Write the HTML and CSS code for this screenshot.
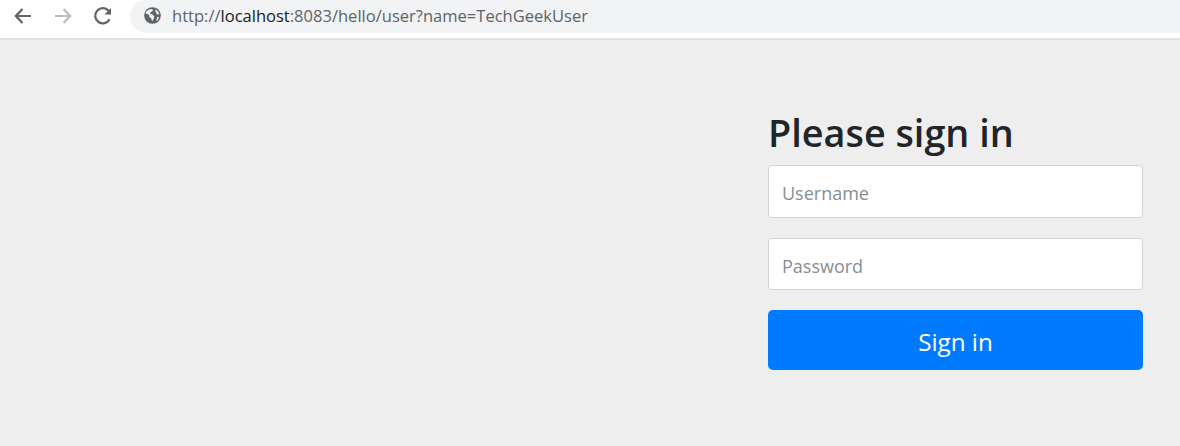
FILE: index.html
```html
<!DOCTYPE html>
<html lang="en">
<head>
<meta charset="utf-8">
<title>Please sign in</title>
<link rel="stylesheet" href="styles.css">
</head>
<body>
<header class="toolbar">
  <svg class="nav-icon" viewBox="0 0 24 24"><path class="stroke dark" d="M20 12H5M11.5 5L4.8 12l6.700 7"/></svg>
  <svg class="nav-icon" viewBox="0 0 24 24"><path class="stroke light" d="M4 12h15M12.500 5l6.700 7-6.700 7"/></svg>
  <svg class="nav-icon" viewBox="0 0 24 24"><path class="stroke dark" d="M18.600 15.200A7.600 7.600 0 1 1 17.600 6.800"/><path class="fill-dark" d="M20 4v6.600h-6.600z"/></svg>
  <div class="omnibox">
    <svg class="globe" viewBox="0 0 18 18"><circle class="fill-dark" cx="9" cy="9" r="8.800"/><path class="land" d="M2.500 4.500l4-2.300 3 .5-.6 2-2 .6-.5 1.600 2.600 1 1.800 2-.7 3-1.600 2.200-.8-3-2-1.600-.4-2.200L1.800 7zM12 2.300l3.300 2.600.8 2.800-2.200.2-1.700-2.800zM14 10.500l2 .1-1.500 3.400-1.500.7z"/></svg>
    <span class="url"><span class="url-dim">http://</span><span class="url-host">localhost</span><span class="url-dim">:8083/hello/user?name=TechGeekUser</span></span>
  </div>
</header>
<main class="page">
  <form class="signin">
    <h2 class="heading">Please sign in</h2>
    <input class="field field-user" type="text" placeholder="Username">
    <input class="field field-pass" type="password" placeholder="Password">
    <button class="submit" type="button">Sign in</button>
  </form>
</main>
</body>
</html>
```
FILE: styles.css
```css
* { box-sizing: border-box; }
html, body { margin: 0; height: 100%; overflow: hidden; }
body {
  display: flex;
  flex-direction: column;
  background: #eeeeee;
  font-family: "Open Sans", "Noto Sans", sans-serif;
}
.toolbar {
  display: flex;
  align-items: flex-start;
  height: 40px;
  flex: none;
  background: #fff;
  border-bottom: 2px solid #dee1e6;
  padding-left: 3px;
}
.nav-icon {
  width: 40px;
  height: 32px;
  padding: 4px 8px;
  flex: none;
}
.stroke { fill: none; stroke-width: 2.2; }
.dark { stroke: #5f6368; }
.light { stroke: #bcbdbf; }
.fill-dark { fill: #5f6368; }
.land { fill: #f1f3f4; }
.omnibox {
  display: flex;
  align-items: center;
  flex: 1;
  height: 33px;
  margin-left: 7px;
  padding: 0 0 2px 14px;
  background: #f1f3f4;
  border-radius: 16.5px 0 0 16.5px;
}
.globe { width: 17px; height: 17px; flex: none; }
.url {
  margin-left: 11px;
  font-size: 16.55px;
  white-space: nowrap;
}
.url-dim { color: #5f6368; }
.url-host { color: #202124; }
.page {
  flex: 1;
  display: flex;
  justify-content: flex-end;
  padding: 68px 37px 0 0;
}
.signin {
  display: flex;
  flex-direction: column;
  width: 375px;
}
.heading {
  margin: 0 0 8px;
  height: 49px;
  font-size: 37.8px;
  font-weight: 600;
  line-height: 49px;
  color: #212529;
}
.field {
  width: 100%;
  padding: 2px 13px 0;
  background: #fff;
  border: 1px solid #ced4da;
  border-radius: 4px;
  font: 400 18px "Open Sans", "Noto Sans", sans-serif;
  color: #495057;
  outline: none;
}
.field::placeholder { color: #868e96; opacity: 1; }
.field-user { height: 53px; margin-bottom: 20px; }
.field-pass { height: 52px; margin-bottom: 20px; padding-top: 4px; }
.submit {
  height: 60px;
  padding-top: 4px;
  border: 0;
  border-radius: 5px;
  background: #007bff;
  color: #fff;
  font: 400 24.2px "Open Sans", "Noto Sans", sans-serif;
}
```
